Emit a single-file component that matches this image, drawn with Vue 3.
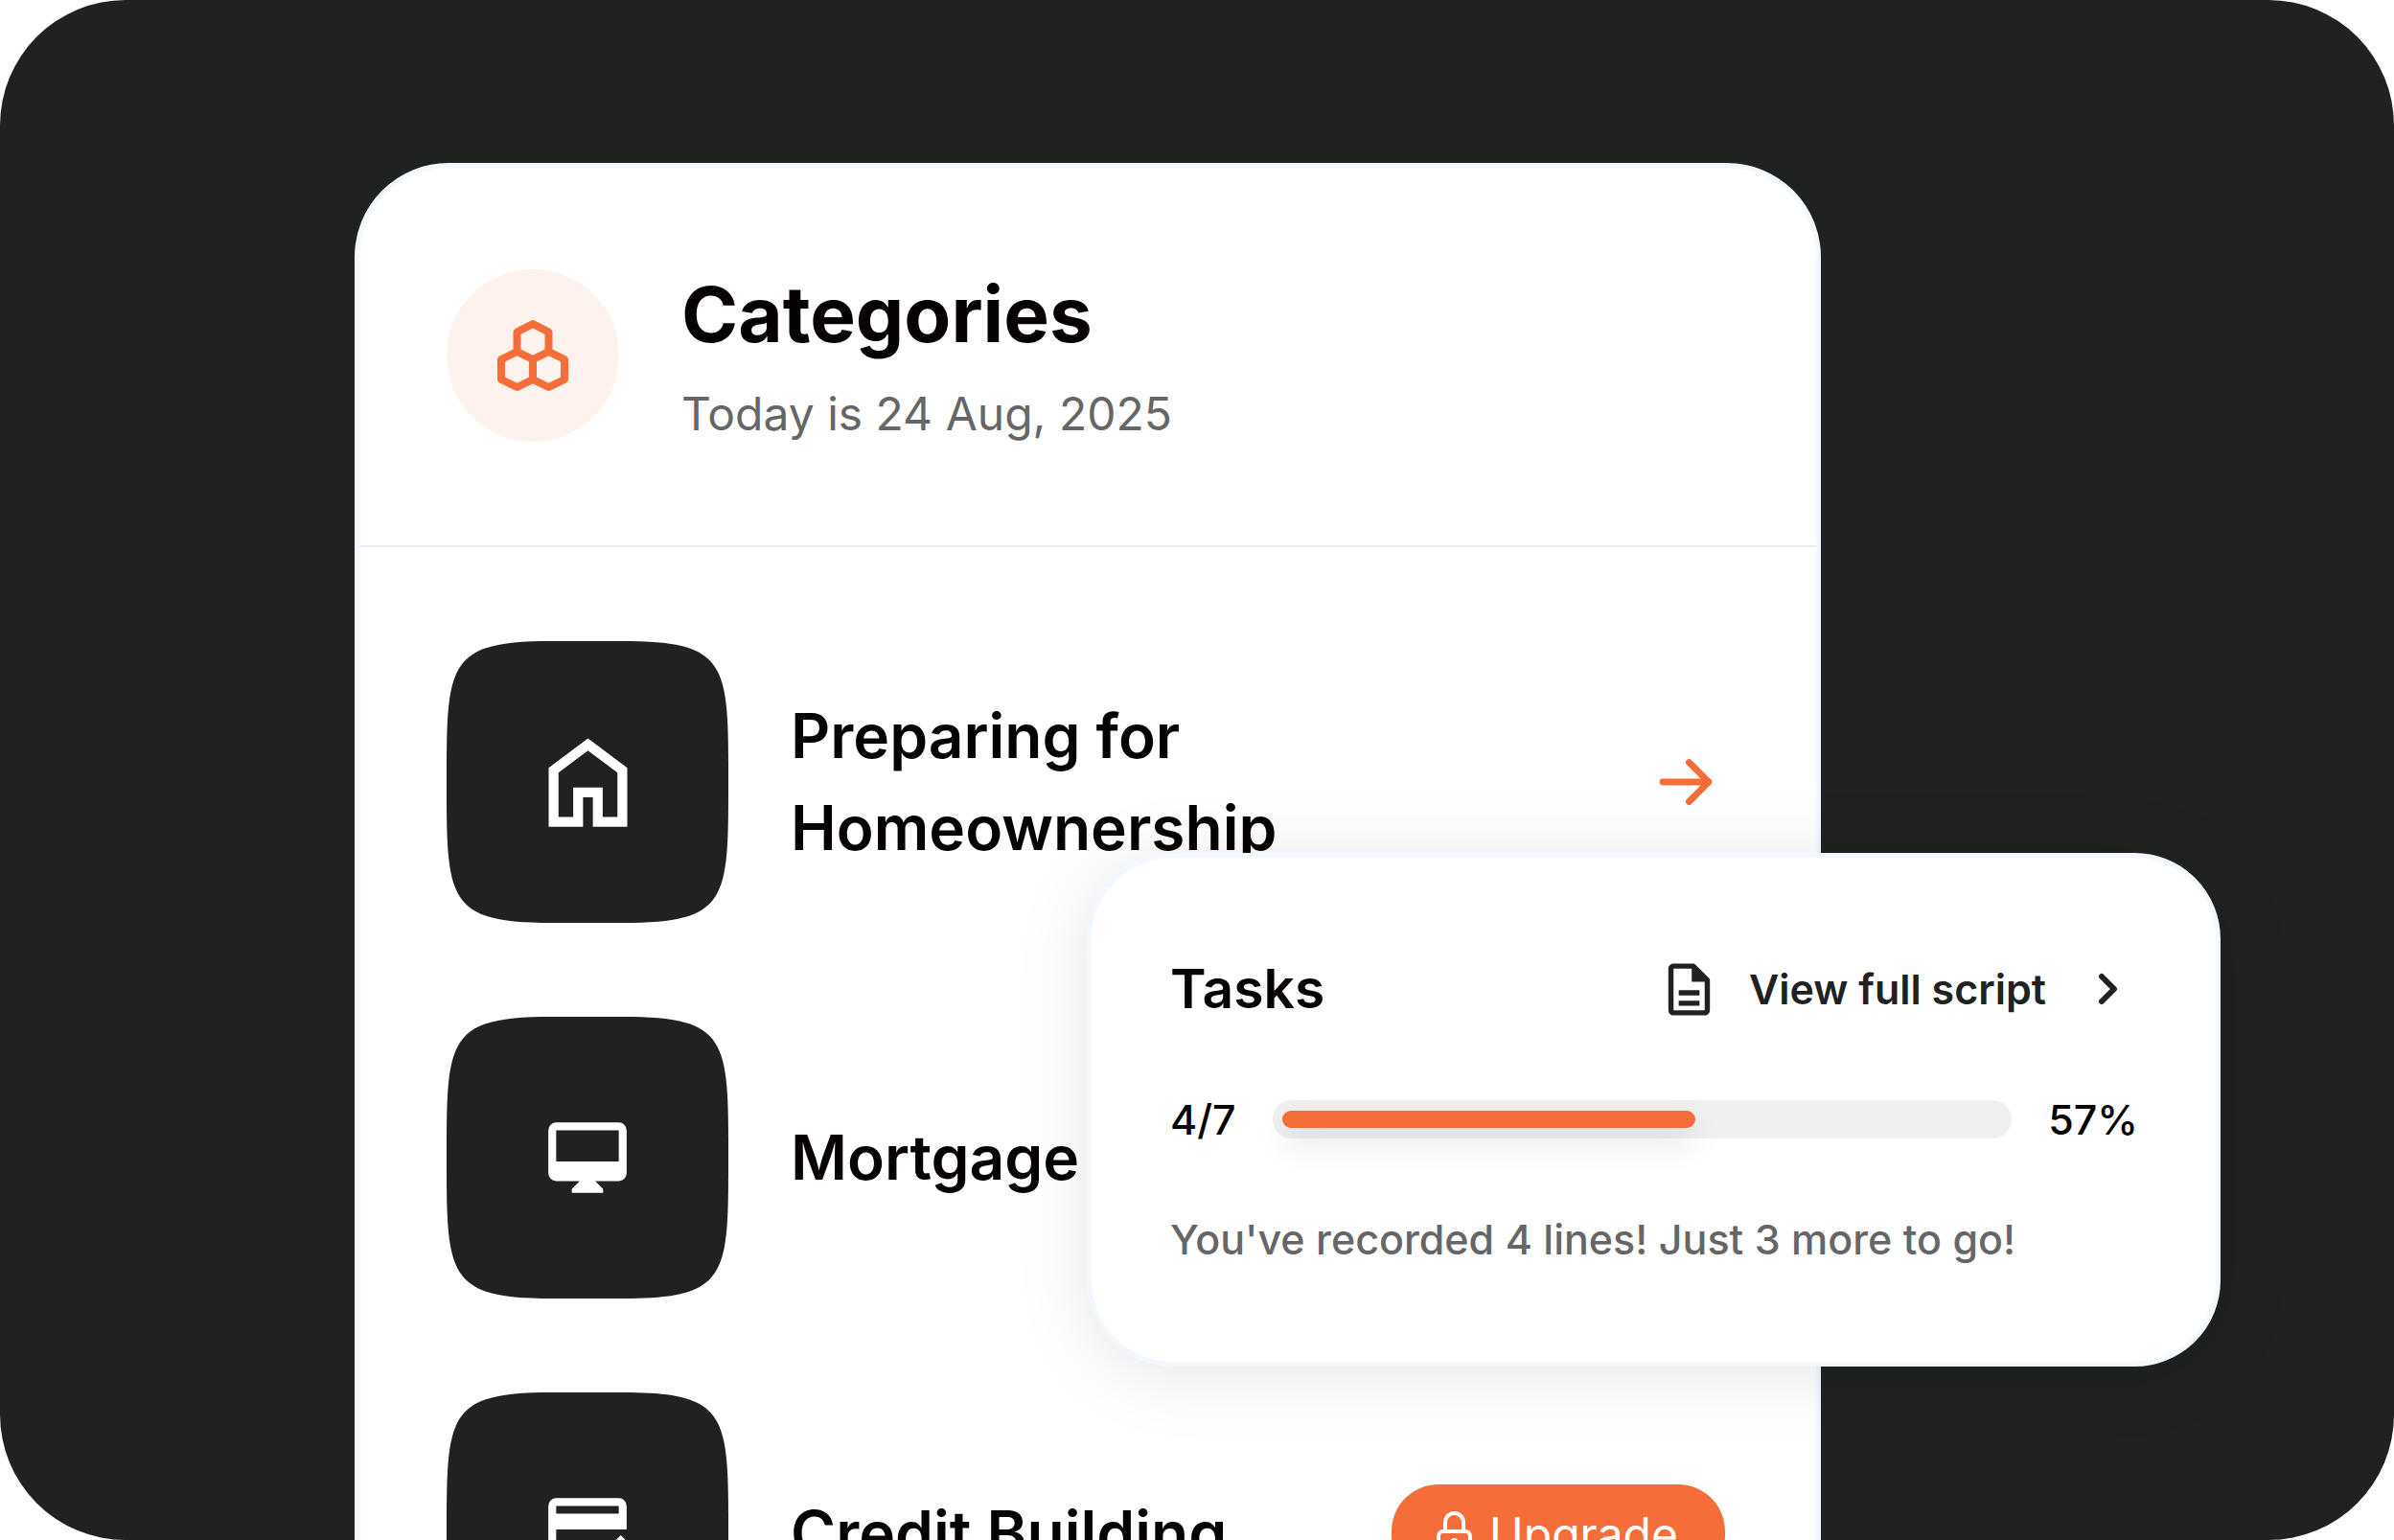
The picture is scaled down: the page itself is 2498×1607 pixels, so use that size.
<script setup>
import { computed, ref } from "vue";

const today = ref("24 Aug, 2025");

const categories = ref([
  { id: 1, name: "Preparing for Homeownership", icon: "home", action: "open" },
  { id: 2, name: "Mortgage", icon: "monitor", action: null },
  { id: 3, name: "Credit Building", icon: "card", action: "upgrade" },
]);

const done = ref(4);
const total = ref(7);

const remaining = computed(() => total.value - done.value);
const percent = computed(() => Math.round((done.value / total.value) * 100));
</script>

<template>
  <main class="stage">
    <section class="categories">
      <header class="categories-header">
        <div class="badge">
          <svg class="badge-icon" viewBox="0 0 74 74" aria-hidden="true">
            <path
              d="M37 4 53.500 12.500V33L37 41 20.500 33V12.500Z M20.500 33 37 41V62L20.500 70 4 62V41Z M53.500 33 70 41V62L53.500 70 37 62V41Z"
            />
          </svg>
        </div>
        <div>
          <h1 class="title">Categories</h1>
          <p class="date">Today is {{ today }}</p>
        </div>
      </header>

      <ul class="list">
        <li v-for="category in categories" :key="category.id" class="item">
          <div class="tile">
            <svg class="tile-shape" viewBox="0 0 294 294" aria-hidden="true">
              <path
                d="M0 147C0 24 0 0 110 0H184C294 0 294 24 294 147S294 294 184 294H110C0 294 0 270 0 147Z"
              />
            </svg>
            <svg
              v-if="category.icon === 'home'"
              class="tile-icon tile-icon-large"
              viewBox="0 0 24 24"
              aria-hidden="true"
            >
              <path
                d="M6 19h3v-6h6v6h3v-9l-6-4.500L6 10v9Zm-2 2V9l8-6 8 6v12h-7v-6h-2v6H4Z"
              />
            </svg>
            <svg
              v-else-if="category.icon === 'monitor'"
              class="tile-icon"
              viewBox="0 0 24 24"
              aria-hidden="true"
            >
              <path
                d="M20 13H4V5h16v8Zm0-10H4a2 2 0 0 0-2 2v11a2 2 0 0 0 2 2h6l-2 2v1h8v-1l-2-2h6a2 2 0 0 0 2-2V5a2 2 0 0 0-2-2Z"
              />
            </svg>
            <svg v-else class="tile-icon" viewBox="0 0 24 24" aria-hidden="true">
              <path
                d="M4 3a2 2 0 0 0-2 2v12a2 2 0 0 0 2 2h8v-2H4v-6h18V5a2 2 0 0 0-2-2H4Zm0 2h16v2H4V5Zm16.500 7.500L14 19v2.500h2.500L23 15l-2.500-2.500Z"
              />
            </svg>
          </div>

          <h2 class="name">{{ category.name }}</h2>

          <button
            v-if="category.action === 'open'"
            class="open"
            type="button"
            :aria-label="'Open ' + category.name"
          >
            <svg class="open-icon" viewBox="0 0 24 24" aria-hidden="true">
              <path d="M5 12h14M13 18l6-6-6-6" />
            </svg>
          </button>
          <button
            v-if="category.action === 'upgrade'"
            class="upgrade"
            type="button"
          >
            <svg class="lock" viewBox="0 0 49 49" aria-hidden="true">
              <path d="M15 21v-8.500a9.500 9.500 0 0 1 19 0V21" />
              <rect x="8" y="22" width="33" height="24" rx="5" />
              <circle cx="24.500" cy="33" r="2" />
            </svg>
            Upgrade
          </button>
        </li>
      </ul>
    </section>

    <section class="tasks">
      <div class="tasks-header">
        <h2 class="tasks-title">Tasks</h2>
        <a class="script-link" href="#">
          <svg class="doc" viewBox="0 0 24 24" aria-hidden="true">
            <path
              d="M8 16.300h8v2H8zm0-4h8v2H8zM14 2H6c-1.100 0-2 .9-2 2v16c0 1.100.9 2 2 2h12c1.100 0 2-.9 2-2V8l-6-6zm4 18H6V4h7v5h5v11z"
            />
          </svg>
          <span>View full script</span>
          <svg class="chevron" viewBox="0 0 24 34" aria-hidden="true">
            <path d="M5 4l13 13L5 30" />
          </svg>
        </a>
      </div>

      <div class="progress">
        <span>{{ done }}/{{ total }}</span>
        <div
          class="track"
          role="progressbar"
          aria-label="Tasks"
          :aria-valuenow="percent"
          aria-valuemin="0"
          aria-valuemax="100"
        >
          <div class="fill" :style="{ width: percent + '%' }"></div>
        </div>
        <span>{{ percent }}%</span>
      </div>

      <p class="hint">
        You've recorded {{ done }} lines! Just {{ remaining }} more to go!
      </p>
    </section>
  </main>
</template>

<style>
body {
  background: #fff;
}
</style>

<style scoped>
.stage {
  position: relative;
  box-sizing: border-box;
  height: 100vh;
  padding: 170px 598px 0 370px;
  overflow: hidden;
  border-radius: 131px;
  background: #202221;
  color: #060203;
  font-family: Inter, sans-serif;
}

h1,
h2,
p,
ul {
  margin: 0;
  padding: 0;
}

.categories {
  border: 5px solid #f3f8ff;
  border-radius: 98px;
  background: #fff;
}

.categories-header {
  display: flex;
  align-items: center;
  gap: 65px;
  padding: 106px 91px 108px;
  border-bottom: 2px solid #ebebeb;
}

.badge {
  display: flex;
  align-items: center;
  justify-content: center;
  width: 180px;
  height: 180px;
  border-radius: 50%;
  background: #fef2ec;
}

.badge-icon {
  width: 74px;
  height: 74px;
  fill: none;
  stroke: #f56d39;
  stroke-width: 8;
  stroke-linejoin: round;
}

.title {
  font-size: 80px;
  font-weight: 700;
  line-height: 94px;
}

.date {
  margin-top: 28px;
  color: #666;
  font-size: 48px;
  line-height: 58px;
}

.list {
  display: flex;
  flex-direction: column;
  gap: 98px;
  padding: 98px 91px;
  list-style: none;
}

.item {
  display: flex;
  align-items: center;
  gap: 65px;
}

.tile {
  display: grid;
  flex: none;
  place-items: center;
  width: 294px;
  height: 294px;
}

.tile > * {
  grid-area: 1 / 1;
}

.tile-shape {
  width: 100%;
  height: 100%;
  fill: #202221;
}

.tile-icon {
  width: 98px;
  height: 98px;
  fill: #fff;
}

.tile-icon-large {
  width: 123px;
  height: 123px;
}

.name {
  flex: 1;
  max-width: 620px;
  font-size: 64px;
  font-weight: 600;
  line-height: 96px;
}

.open,
.upgrade {
  display: flex;
  align-items: center;
  margin-right: 4px;
  margin-left: auto;
  padding: 0;
  border: 0;
  background: none;
  font-family: inherit;
  cursor: pointer;
}

.open-icon {
  width: 82px;
  height: 82px;
  fill: none;
  stroke: #f56d39;
  stroke-width: 2;
  stroke-linecap: round;
  stroke-linejoin: round;
}

.upgrade {
  gap: 12px;
  height: 102px;
  padding: 0 49px 0 41px;
  border-radius: 49px;
  background: #f56d39;
  color: #fff;
  font-size: 48px;
}

.lock {
  width: 49px;
  height: 49px;
  fill: none;
  stroke: #fff;
  stroke-width: 4;
}

.tasks {
  position: absolute;
  top: 890px;
  right: 181px;
  left: 1134px;
  padding: 97px 81px 95px 82px;
  border: 5px solid #f3f8ff;
  border-radius: 90px;
  background: #fff;
  box-shadow: 0 8px 80px rgba(0, 0, 0, 0.1);
}

.tasks-header,
.script-link,
.progress {
  display: flex;
  align-items: center;
}

.tasks-header {
  justify-content: space-between;
}

.tasks-title {
  font-size: 57px;
  font-weight: 600;
  line-height: 80px;
}

.script-link {
  padding-right: 19px;
  color: #202221;
  font-size: 43px;
  font-weight: 600;
  text-decoration: none;
}

.doc {
  width: 65px;
  height: 65px;
  margin-right: 30px;
  fill: #202221;
}

.chevron {
  width: 24px;
  height: 34px;
  margin-left: 53px;
  fill: none;
  stroke: #202221;
  stroke-width: 6;
  stroke-linecap: round;
  stroke-linejoin: round;
}

.progress {
  gap: 38px;
  margin-top: 64px;
  font-size: 43px;
  font-weight: 500;
  line-height: 64px;
}

.track {
  flex: 1;
  padding: 11px 4px 11px 10px;
  border-radius: 20px;
  background: #f0f0f0;
}

.fill {
  height: 18px;
  border-radius: 9px;
  background: #f56d39;
  box-shadow: 0 16px 33px rgba(0, 0, 0, 0.12);
}

.hint {
  margin-top: 60px;
  color: #666;
  font-size: 43px;
  font-weight: 500;
  line-height: 66px;
}
</style>
